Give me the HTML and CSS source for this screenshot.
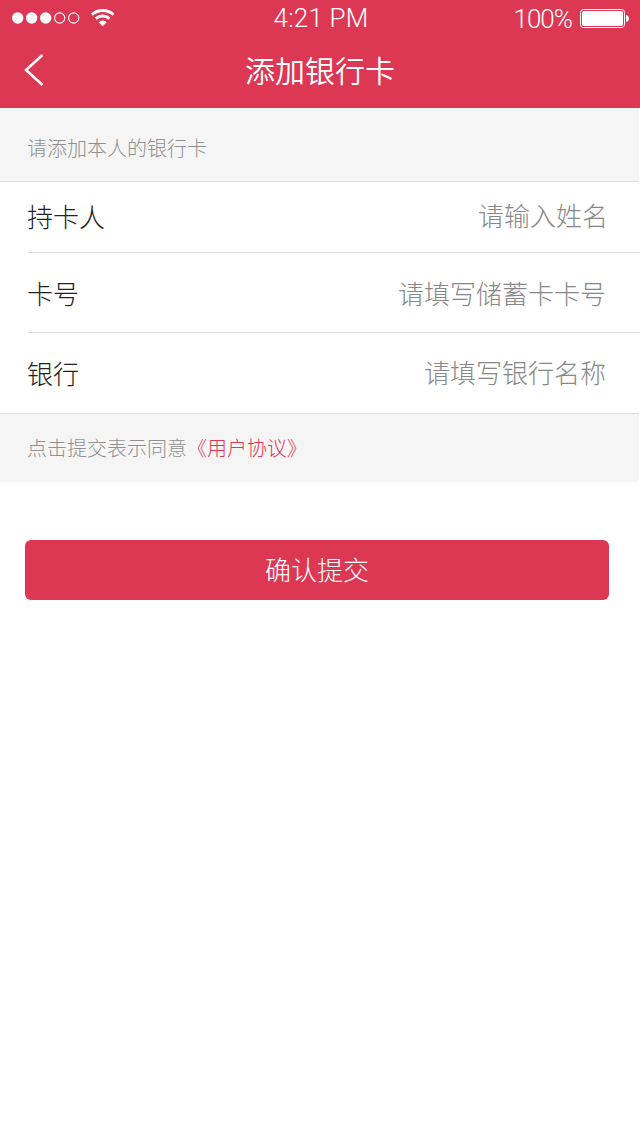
FILE: index.html
```html
<!DOCTYPE html>
<html lang="zh-CN">
<head>
<meta charset="utf-8">
<title>添加银行卡</title>
<link rel="stylesheet" href="styles.css">
</head>
<body>
<header class="top">
  <div class="status">
    <div class="status-left">
      <svg class="signal" width="70" height="14" viewBox="0 0 70 14"><g fill="#fff"><circle cx="5.7" cy="7" r="5.7"/><circle cx="19.7" cy="7" r="5.7"/><circle cx="33.7" cy="7" r="5.7"/></g><g fill="none" stroke="#fff" stroke-width="1.1"><circle cx="47.7" cy="7" r="5.1"/><circle cx="61.7" cy="7" r="5.1"/></g></svg>
      <svg class="wifi" width="26" height="20" viewBox="0 0 26 20"><g fill="none" stroke="#fff" stroke-width="2.8"><path d="M1.9 6.6a16.3 16.3 0 0 1 21.6 0"/><path d="M5.8 10.6a10.4 10.4 0 0 1 13.8 0"/></g><path fill="#fff" d="M8.700 14.200a5.700 5.700 0 0 1 8 0l-4 4z"/></svg>
    </div>
    <span class="time">4:21 PM</span>
    <div class="status-right">
      <span class="percent">100%</span>
      <svg class="battery" width="50" height="20" viewBox="0 0 50 20"><rect x=".5" y=".5" width="44" height="18" rx="3" fill="none" stroke="#fff"/><rect x="2" y="2" width="41" height="15" rx="2" fill="#fff"/><path fill="#fff" d="M46 6q3 1 3 3.500t-3 3.500z"/></svg>
    </div>
  </div>
  <div class="nav">
    <svg class="back" width="22" height="34" viewBox="0 0 22 34"><path d="M19.500 2L3 17l16.500 15" fill="none" stroke="#fff" stroke-width="2.500"/></svg>
    <h1 class="title">添加银行卡</h1>
  </div>
</header>
<main>
  <p class="hint">请添加本人的银行卡</p>
  <div class="form">
    <div class="row name"><span class="label">持卡人</span><span class="value">请输入姓名</span></div>
    <div class="row number"><span class="label">卡号</span><span class="value">请填写储蓄卡卡号</span></div>
    <div class="row bank"><span class="label">银行</span><span class="value">请填写银行名称</span></div>
  </div>
  <p class="agreement">点击提交表示同意<a class="link">《用户协议》</a></p>
  <button class="submit">确认提交</button>
</main>
</body>
</html>
```

FILE: styles.css
```css
* { box-sizing: border-box; }
body { margin: 0; background: #fff; font-family: "Noto Sans CJK SC Light", "Noto Sans CJK SC", sans-serif; font-weight: 300; }
.top { height: 108px; background: #dc3753; color: #fff; }
.status { height: 36px; display: grid; grid-template-columns: 1fr auto 1fr; align-items: center; padding: 0 10px 0 12px; font-family: Roboto, "Liberation Sans", sans-serif; font-size: 26px; font-weight: 300; }
.status-left, .status-right { display: flex; align-items: center; }
.status-left { gap: 8px; }
.status-right { justify-content: flex-end; gap: 8px; }
.battery { margin-top: 1px; }
.time { letter-spacing: .2px; }
.percent { letter-spacing: -1px; padding-top: 1px; }
.nav { height: 68px; display: grid; grid-template-columns: 100px 1fr 100px; align-items: center; }
.back { margin-left: 23px; }
.title { margin: 0; padding-bottom: 3px; text-align: center; font-family: "Noto Sans CJK SC DemiLight", "Noto Sans CJK SC", sans-serif; font-size: 30px; font-weight: 350; }
.hint { margin: 0 1px 0 0; height: 74px; padding: 7px 27px 0; background: #f5f5f5; color: #909090; font-size: 20px; line-height: 66px; border-bottom: 1px solid #e2e2e2; }
.form { padding-left: 28px; color: #222; font-size: 26px; }
.row { display: flex; justify-content: space-between; padding-right: 34px; border-bottom: 1px solid #ddd; }
.label { margin-left: -1px; }
.value { color: #888; }
.name { height: 71px; padding-right: 32px; line-height: 67px; }
.name .value { line-height: 65px; }
.number { height: 80px; line-height: 80px; }
.bank { height: 80px; line-height: 79px; border-bottom: 0; }
.bank .value { line-height: 77px; }
.agreement { margin: 0 1px 0 0; height: 69px; padding-left: 27px; background: #f5f5f5; border-top: 1px solid #ddd; color: #909090; font-size: 20px; line-height: 67px; }
.link { color: #dc3753; }
.submit { display: block; width: 584px; height: 60px; margin: 58px 0 0 25px; padding: 0 0 2px; border: 0; border-radius: 6px; background: #dc3753; color: #fff; font: inherit; font-size: 26px; line-height: 56px; }
```
